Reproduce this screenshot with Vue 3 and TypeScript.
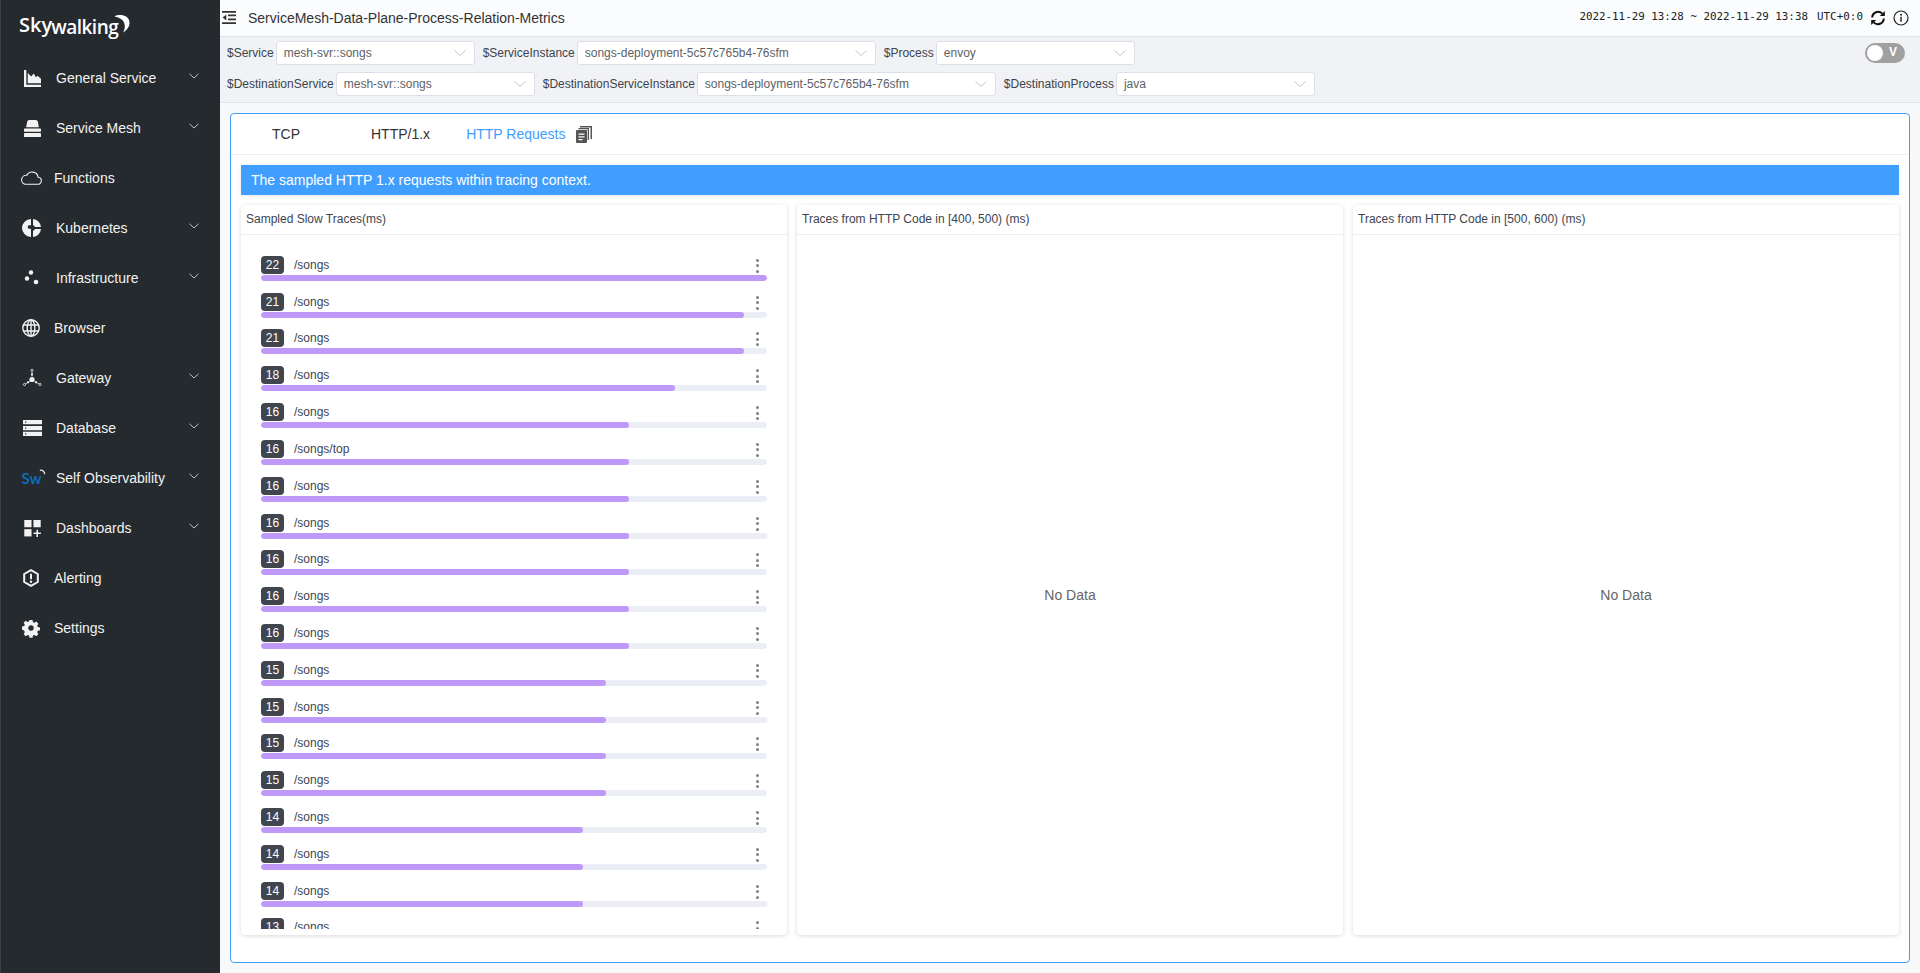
<script setup lang="ts">
interface MenuItem { name: string; icon: string; arrow: boolean }

const menu: MenuItem[] = [
  { name: 'General Service', icon: 'chart', arrow: true },
  { name: 'Service Mesh', icon: 'mesh', arrow: true },
  { name: 'Functions', icon: 'cloud', arrow: false },
  { name: 'Kubernetes', icon: 'kube', arrow: true },
  { name: 'Infrastructure', icon: 'infra', arrow: true },
  { name: 'Browser', icon: 'globe', arrow: false },
  { name: 'Gateway', icon: 'gateway', arrow: true },
  { name: 'Database', icon: 'db', arrow: true },
  { name: 'Self Observability', icon: 'sw', arrow: true },
  { name: 'Dashboards', icon: 'dash', arrow: true },
  { name: 'Alerting', icon: 'alert', arrow: false },
  { name: 'Settings', icon: 'gear', arrow: false },
]

const boxes: Record<string, string> = {
  chart: '1 1 16 16',
  mesh: '1 1 16 16',
  cloud: '0 0 22 14',
  db: '0 0 19 16',
  dash: '0 0 17 17.600',
}

const icons: Record<string, string> = {
  chart: '<path d="M1 1h2.200v13.800H17V17H1z" fill="#f2f2f2"/><path d="M4.500 13.500V3.500l3.200 3.500 2.500-2.700 2 3.500 1.500-1.300 3.300 2.700v4.300z" fill="#f2f2f2"/>',
  mesh: '<path d="M3 7.800 4 2.500Q4.200 1 6 1h6q1.800 0 2 1.500l1 5.300z" fill="#f2f2f2"/><rect x="1" y="9" width="16" height="3" rx=".6" fill="#f2f2f2"/><rect x="1" y="13.200" width="16" height="3.800" rx=".8" fill="#f2f2f2"/>',
  cloud: '<path d="M5 13.300H17.500a3.500 3.500 0 0 0 .6-7A6 6 0 0 0 6.800 4.300 4.600 4.600 0 0 0 5 13.300z" fill="none" stroke="#f2f2f2" stroke-width="1.100"/>',
  kube: '<path d="M8 0v6.200H5.800a2 2 0 0 0 0 3.600H8V18A9 9 0 0 1 8 0zM10 0a9 9 0 0 1 8 8h-6.200a2 2 0 0 0-1.800-1.800zM18 10a9 9 0 0 1-8 8v-6.200a2 2 0 0 0 1.800-1.800z" fill="#f2f2f2"/>',
  infra: '<circle cx="8" cy="3.500" r="2.200" fill="#f2f2f2"/><circle cx="4" cy="9.500" r="2.200" fill="#f2f2f2"/><circle cx="13" cy="13" r="2.300" fill="#f2f2f2"/>',
  globe: '<g fill="none" stroke="#f2f2f2" stroke-width="1.400"><circle cx="9" cy="9" r="8.200"/><ellipse cx="9" cy="9" rx="3.800" ry="8.200"/><path d="M1.500 6h15M1.500 12h15M9 1v16"/></g>',
  gateway: '<g fill="none" stroke="#f2f2f2" stroke-width=".8"><circle cx="9" cy="1.300" r="1.100"/><circle cx="1.500" cy="15.500" r="1.100"/><circle cx="17" cy="15.500" r="1.100"/><path d="M9 2.400v5M2.500 15l4.500-3M16 15l-4.500-3"/></g><circle cx="9" cy="10.500" r="2.600" fill="#f2f2f2"/><circle cx="5" cy="13.300" r="1.100" fill="#f2f2f2"/><circle cx="13" cy="13.300" r="1.100" fill="#f2f2f2"/><circle cx="9" cy="5.500" r="1.100" fill="#f2f2f2"/>',
  db: '<path fill-rule="evenodd" d="M0 0h19v4.300H0zM2 1.500v1.300h1.300V1.500zM0 5.900h19v4.300H0zM2 7.400v1.300h1.300V7.400zM0 11.700h19V16H0zM2 13.200v1.300h1.300v-1.300z" fill="#f2f2f2"/>',
  dash: '<rect x="0" y="0" width="7.500" height="7.500" fill="#f2f2f2"/><rect x="9.500" y="0" width="7.500" height="7.500" fill="#f2f2f2"/><rect x="0" y="9.500" width="7.500" height="7.500" fill="#f2f2f2"/><path d="M12.600 10h1.600v3h3v1.600h-3v3h-1.600v-3h-3V13h3z" fill="#f2f2f2"/>',
  alert: '<path d="M9 1.200 15.800 5v8L9 16.800 2.200 13V5z" fill="none" stroke="#f2f2f2" stroke-width="2" stroke-linejoin="round"/><rect x="8" y="4.600" width="2" height="5.800" rx="1" fill="#f2f2f2"/><circle cx="9" cy="12.700" r="1.200" fill="#f2f2f2"/>',
  gear: '<path fill-rule="evenodd" d="M7.300 0h3.400l.5 2.500 1.500.7 2.200-1.300 2.300 2.300-1.300 2.200.6 1.500 2.500.5v3.200l-2.500.5-.6 1.500 1.300 2.200-2.300 2.300-2.200-1.300-1.500.6-.5 2.500H7.300l-.5-2.500-1.500-.6-2.200 1.300-2.300-2.300 1.300-2.200-.6-1.500L-1 10.600V7.400l2.500-.5.600-1.500L.8 3.200l2.300-2.300 2.200 1.300 1.500-.7zM9 6a3 3 0 1 0 0 6 3 3 0 0 0 0-6z" fill="#f2f2f2" transform="translate(.9 .9) scale(.9)"/>',
}

function boxOf(key: string): string {
  return boxes[key] ?? '0 0 18 18'
}

interface Option { label: string; value: string; width: number }
const rowOne: Option[] = [
  { label: '$Service', value: 'mesh-svr::songs', width: 199 },
  { label: '$ServiceInstance', value: 'songs-deployment-5c57c765b4-76sfm', width: 299 },
  { label: '$Process', value: 'envoy', width: 199 },
]
const rowTwo: Option[] = [
  { label: '$DestinationService', value: 'mesh-svr::songs', width: 199 },
  { label: '$DestinationServiceInstance', value: 'songs-deployment-5c57c765b4-76sfm', width: 299 },
  { label: '$DestinationProcess', value: 'java', width: 199 },
]

const tabs = ['TCP', 'HTTP/1.x', 'HTTP Requests']

const traces: [number, string][] = [
  [22, '/songs'], [21, '/songs'], [21, '/songs'], [18, '/songs'], [16, '/songs'], [16, '/songs/top'],
  [16, '/songs'], [16, '/songs'], [16, '/songs'], [16, '/songs'], [16, '/songs'], [15, '/songs'],
  [15, '/songs'], [15, '/songs'], [15, '/songs'], [14, '/songs'], [14, '/songs'], [14, '/songs'],
  [13, '/songs'],
]
const maxTrace = 22
</script>

<template>
  <div class="app">
    <aside class="side">
      <div class="logo">
        <span class="sky">Sky</span><span class="walking">walking</span>
        <svg class="moon" viewBox="0 0 16 18" width="16" height="18">
          <path d="M.5 1.500C2.500 .2 6-.3 9.500.5c4 1 6 4 6 7.500 0 4-3 7.500-6.500 9.500 1.500-2.500 2.200-5.500 1.500-8.500C10 5.500 6 2.500.5 1.500z" fill="#fff" />
        </svg>
      </div>
      <nav class="nav">
        <div v-for="item in menu" :key="item.name" class="nav-item" :class="{ plain: !item.arrow }">
          <span class="nav-icon">
            <span v-if="item.icon === 'sw'" class="sw">Sw<svg class="sw-arc" viewBox="0 0 8 8" width="7" height="7"><path d="M1 1.500A4.500 4.500 0 0 1 6.500 6" fill="none" stroke="#e8e8e8" stroke-width="1.500" /></svg></span>
            <svg v-else class="glyph" :class="'g-' + item.icon" :viewBox="boxOf(item.icon)" v-html="icons[item.icon]"></svg>
          </span>
          <span class="nav-name">{{ item.name }}</span>
          <svg v-if="item.arrow" class="nav-arrow" viewBox="0 0 10 6" width="10" height="6">
            <path d="M.5 .8 5 5 9.500 .8" fill="none" stroke="#e6e6e6" stroke-width=".8" />
          </svg>
        </div>
      </nav>
    </aside>

    <main class="main">
      <header class="top">
        <svg class="fold" viewBox="0 0 14 13" width="14" height="13">
          <path d="M0 0h14v1.700H0zM6 3.600h8v1.600H6zM6 7.600h8v1.600H6zM0 11.300h14V13H0zM4.300 3.500v6L.6 6.500z" fill="#333" />
        </svg>
        <span class="title">ServiceMesh-Data-Plane-Process-Relation-Metrics</span>
        <span class="time">2022-11-29 13:28 ~ 2022-11-29 13:38</span>
        <span class="utc">UTC+0:0</span>
        <svg class="tool" viewBox="0 0 16 16" width="16" height="16">
          <path d="M2.200 7.500A5.900 5.900 0 0 1 12.300 3.600" fill="none" stroke="#111" stroke-width="2" />
          <path d="M14.800 1v5h-5z" fill="#111" />
          <path d="M13.800 8.500A5.900 5.900 0 0 1 3.700 12.400" fill="none" stroke="#111" stroke-width="2" />
          <path d="M1.200 15v-5h5z" fill="#111" />
        </svg>
        <svg class="tool info" viewBox="0 0 16 16" width="16" height="16">
          <circle cx="8" cy="8" r="7" fill="none" stroke="#222" stroke-width="1.200" />
          <circle cx="8" cy="4.800" r="1" fill="#222" />
          <rect x="7.300" y="6.800" width="1.400" height="5" fill="#222" />
        </svg>
      </header>

      <section class="filters">
        <div class="filter-row">
          <template v-for="o in rowOne" :key="o.label">
            <label class="f-label">{{ o.label }}</label>
            <div class="select" :style="{ width: o.width + 'px' }">
              <span>{{ o.value }}</span>
              <svg viewBox="0 0 12 6" width="12" height="6"><path d="M.5 .5 6 5.500 11.500 .5" fill="none" stroke="#c0c4cc" stroke-width="1" /></svg>
            </div>
          </template>
          <div class="toggle"><i class="knob"></i><b>V</b></div>
        </div>
        <div class="filter-row">
          <template v-for="o in rowTwo" :key="o.label">
            <label class="f-label">{{ o.label }}</label>
            <div class="select" :style="{ width: o.width + 'px' }">
              <span>{{ o.value }}</span>
              <svg viewBox="0 0 12 6" width="12" height="6"><path d="M.5 .5 6 5.500 11.500 .5" fill="none" stroke="#c0c4cc" stroke-width="1" /></svg>
            </div>
          </template>
        </div>
      </section>

      <section class="content">
        <div class="card">
          <div class="tabs">
            <span v-for="(t, i) in tabs" :key="t" class="tab" :class="{ active: i === 2 }">{{ t }}</span>
            <svg class="copy" viewBox="0 0 16 17" width="16" height="17">
              <path d="M4 0h12v13h-1.500V1.500H4z" fill="#555" />
              <path d="M2.500 2H13v12h-1.300V3.300H2.500z" fill="#555" />
              <path fill-rule="evenodd" d="M1 4h9.500a.5.500 0 0 1 .5.500V16a1 1 0 0 1-1 1H1a1 1 0 0 1-1-1V5a1 1 0 0 1 1-1zM2.500 7.500v1.200h6V7.500zM2.500 10.300v1.200h6v-1.200zM2.500 13v1.200h4V13z" fill="#555" />
            </svg>
          </div>
          <div class="banner">The sampled HTTP 1.x requests within tracing context.</div>
          <div class="panels">
            <div class="panel">
              <div class="p-head">Sampled Slow Traces(ms)</div>
              <div class="list">
                <div v-for="(r, i) in traces" :key="i" class="row">
                  <div class="row-top">
                    <span class="badge">{{ r[0] }}</span>
                    <span class="path">{{ r[1] }}</span>
                    <span class="dots"><i></i><i></i><i></i></span>
                  </div>
                  <div class="track"><div class="fill" :style="{ width: (r[0] / maxTrace) * 100 + '%' }"></div></div>
                </div>
              </div>
            </div>
            <div class="panel">
              <div class="p-head">Traces from HTTP Code in [400, 500) (ms)</div>
              <div class="empty">No Data</div>
            </div>
            <div class="panel">
              <div class="p-head">Traces from HTTP Code in [500, 600) (ms)</div>
              <div class="empty">No Data</div>
            </div>
          </div>
        </div>
      </section>
    </main>
  </div>
</template>

<style>
html, body { margin: 0; height: 100%; overflow: hidden; }
</style>

<style scoped>
.app { display: flex; height: 973px; font-family: "Liberation Sans", Arial, sans-serif; color: #3d444f; }
.side { width: 220px; flex: none; background: #252a2f; border-left: 1px solid #3a4046; box-sizing: border-box; color: #f2f2f2; }
.logo { height: 53px; box-sizing: border-box; padding: 12px 0 0 18px; display: flex; align-items: flex-start; color: #fff; font-family: "Open Sans", sans-serif; font-weight: 600; position: relative; }
.sky { font-size: 20px; line-height: 26px; }
.walking { font-size: 19px; line-height: 26px; margin-top: 2px; margin-left: -1px; letter-spacing: -.5px; }
.moon { position: absolute; left: 113px; top: 15px; }
.nav-item { height: 50px; display: flex; align-items: center; position: relative; padding-left: 19px; font-size: 14px; }
.nav-icon { width: 24px; height: 24px; display: flex; align-items: center; justify-content: center; flex: none; margin-right: 12px; }
.plain .nav-icon { margin-left: -1px; margin-right: 11px; }
.glyph { width: 18px; height: 18px; overflow: visible; }
.g-chart, .g-mesh, .g-dash { width: 17px; height: 17px; }
.g-cloud { width: 22px; height: 14px; }
.g-db { width: 19px; height: 16px; }
.nav-name { white-space: nowrap; }
.nav-arrow { position: absolute; left: 188px; top: 20px; }
.sw { color: #0d6cb5; font-family: "Lato", sans-serif; font-weight: 700; font-size: 15px; line-height: 18px; position: relative; display: block; margin-left: -1px; }
.sw-arc { position: absolute; left: 18px; top: 0; }

.main { flex: 1; min-width: 0; display: flex; flex-direction: column; background: #f7f9fa; }
.top { height: 36px; flex: none; background: #fbfcfd; border-bottom: 1px solid #dfe4e8; display: flex; align-items: center; color: #333; }
.fold { margin-left: 2px; margin-right: 12px; margin-top: -2px; }
.title { font-size: 14px; margin-top: -1px; }
.time { margin-left: auto; font-family: "DejaVu Sans Mono", monospace; font-size: 10.85px; margin-top: -3px; white-space: nowrap; color: #222; }
.utc { margin-left: 9px; font-family: "DejaVu Sans Mono", monospace; font-size: 10.85px; margin-top: -3px; letter-spacing: .05px; color: #222; }
.tool { margin-left: 7px; margin-right: 1px; }
.tool.info { margin-left: 6px; margin-right: 11px; }

.filters { flex: none; box-sizing: border-box; background: #f0f2f5; border-bottom: 1px solid #dfe4e8; padding: 4px 15px 0 7px; display: flex; flex-direction: column; gap: 7px; height: 66px; }
.filter-row { display: flex; align-items: center; height: 24px; }
.f-label { font-size: 12px; margin-right: 2px; white-space: nowrap; color: #3d444f; }
.select { height: 24px; box-sizing: border-box; background: #fff; border: 1px solid #dcdfe6; border-radius: 3px; display: flex; align-items: center; justify-content: space-between; padding: 0 8px 0 7px; font-size: 12px; color: #606266; margin-right: 8px; flex: none; }
.toggle { margin-left: auto; width: 40px; height: 20px; border-radius: 10px; background: #a0a0a0; position: relative; color: #fff; font-size: 12px; }
.knob { position: absolute; left: 2px; top: 2px; width: 16px; height: 16px; border-radius: 50%; background: #fff; }
.toggle b { position: absolute; left: 24px; top: 2px; line-height: 14px; }

.content { flex: 1; min-height: 0; padding: 10px; display: flex; }
.card { flex: 1; min-width: 0; box-sizing: border-box; background: #fff; border: 1px solid #409eff; border-radius: 4px; display: flex; flex-direction: column; padding-bottom: 27px; }
.tabs { height: 40px; flex: none; border-bottom: 1px solid #eee; display: flex; align-items: center; padding-left: 41px; font-size: 14px; color: #333; }
.tab { margin-right: 36px; white-space: nowrap; }
.tab:first-child { margin-right: 71px; }
.tab.active { color: #409eff; margin-right: 11px; }
.copy { flex: none; }
.banner { margin: 10px; height: 30px; flex: none; line-height: 30px; background: #409eff; color: #fff; font-size: 14px; padding-left: 10px; box-shadow: 0 1px 4px rgba(0, 0, 0, .1); }
.panels { flex: 1; min-height: 0; margin: 0 10px; display: flex; gap: 10px; }
.panel { flex: 1 1 0; min-width: 0; background: #fff; border-radius: 4px; box-shadow: 0 1px 4px rgba(0, 0, 0, .15); display: flex; flex-direction: column; }
.p-head { height: 30px; flex: none; box-sizing: border-box; border-bottom: 1px solid #eee; padding-left: 5px; font-size: 12px; line-height: 28px; color: #3d444f; white-space: nowrap; }
.list { height: 694px; flex: none; overflow: hidden; box-sizing: border-box; padding: 9px 20px 0; }
.row { height: 36.82px; display: flex; flex-direction: column; justify-content: flex-end; }
.row-top { display: flex; align-items: center; height: 18px; margin-bottom: 1px; position: relative; }
.badge { width: 23px; height: 18px; flex: none; border-radius: 4px; background: #40454e; color: #fff; font-size: 12px; line-height: 18px; text-align: center; }
.path { margin-left: 10px; font-size: 12px; color: #3d444f; }
.dots { position: absolute; right: 8px; top: 3px; display: flex; flex-direction: column; gap: 2.5px; }
.dots i { display: block; width: 3px; height: 3px; border-radius: 50%; background: #808080; }
.track { height: 6px; flex: none; border-radius: 3px; background: #ebeef5; overflow: hidden; }
.fill { height: 100%; border-radius: 3px; background: #bf99f8; }
.empty { flex: 1; display: flex; align-items: center; justify-content: center; font-size: 14px; color: #666; padding-top: 19px; }
</style>
